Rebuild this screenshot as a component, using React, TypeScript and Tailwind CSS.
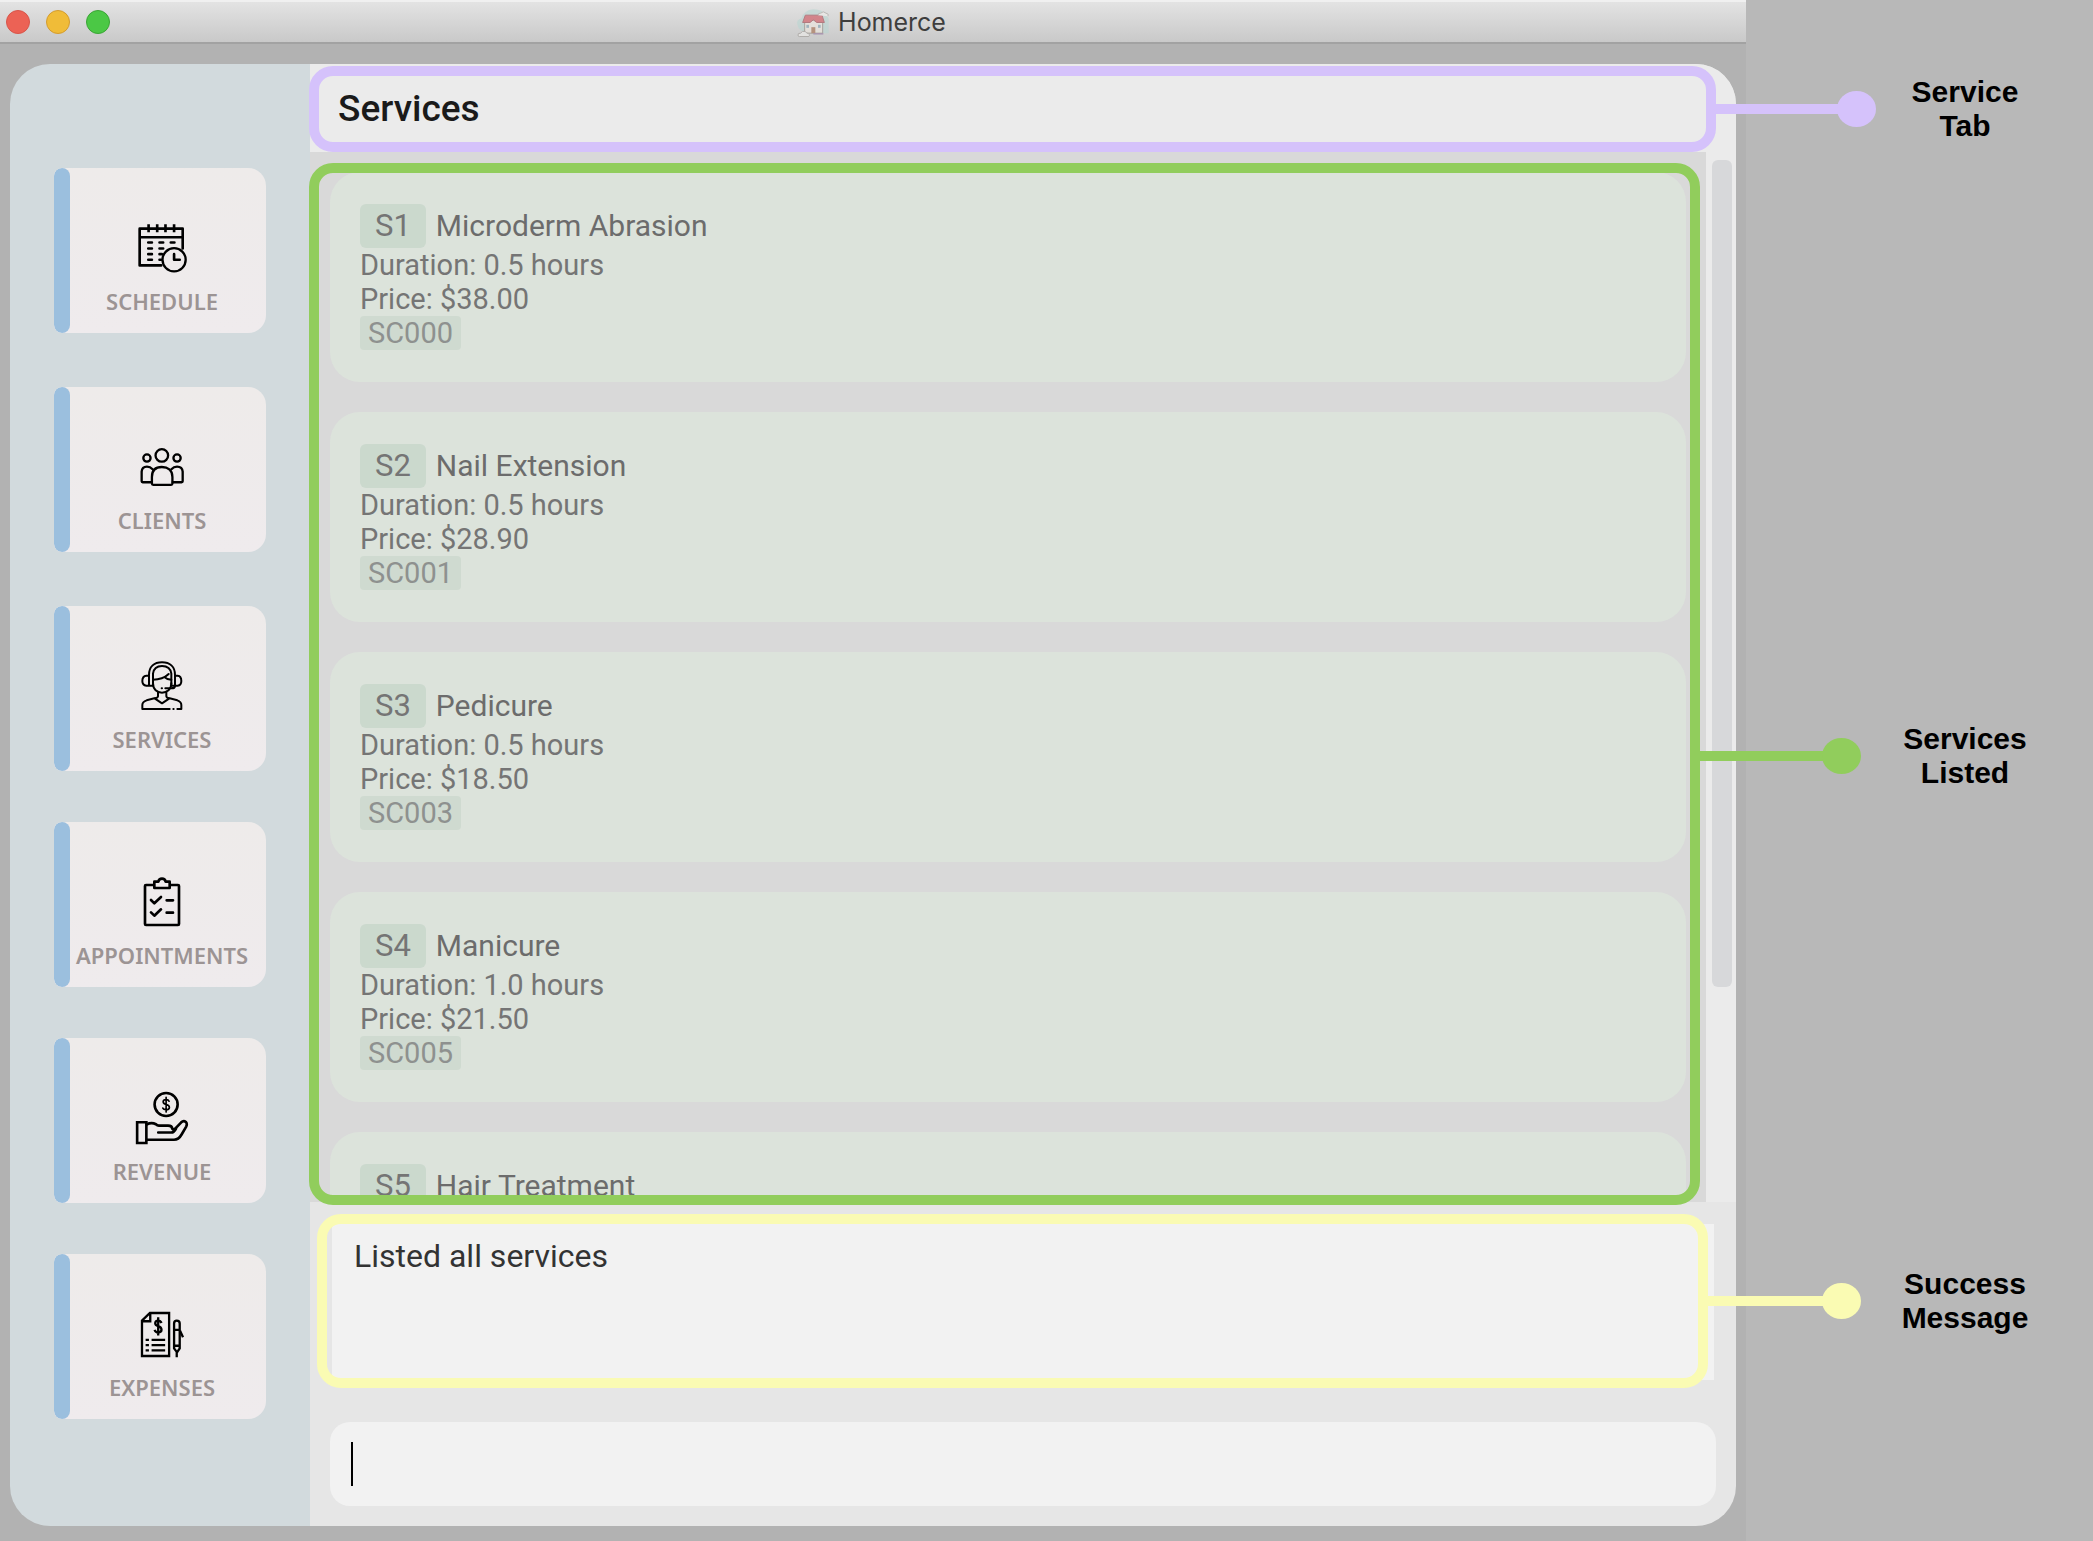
import React from "react";

type IconProps = { className?: string };

const stroke = {
  fill: "none",
  stroke: "#000",
  strokeLinecap: "round" as const,
  strokeLinejoin: "round" as const,
};

function HouseLogo() {
  return (
    <svg viewBox="46 20 102 92" className="h-[31px] w-[34px] opacity-60" aria-hidden="true">
      <path d="M50 72 Q46 58 62 54 Q70 28 98 26 Q128 26 134 44 Q146 48 144 62 V98 H80 Q54 92 50 72Z" fill="#b9d6d2" />
      <path d="M72 66 L96 58 L126 66 V98 H72Z" fill="#efe8df" stroke="#8b8279" strokeWidth="3" />
      <path d="M74 44 H124 L131 66 H108 L98 58 L88 66 H66Z" fill="#cf4f58" stroke="#9a4048" strokeWidth="3" />
      <rect x="92" y="80" width="12" height="18" fill="#a46a48" />
      <rect x="77" y="73" width="8" height="9" fill="#7f9fb0" />
      <rect x="112" y="73" width="8" height="9" fill="#7f9fb0" />
      <path d="M98 100 H128" stroke="#8d6b9b" strokeWidth="4" />
      <path d="M52 106 Q50 97 60 98 Q64 90 74 93 Q78 100 84 99 Q90 108 82 108 H56Z" fill="#f0efec" stroke="#9d9994" strokeWidth="3" />
      <path d="M112 44 Q112 37 120 38 Q128 30 136 38 Q146 40 142 47" fill="#f0efec" stroke="#a5a19c" strokeWidth="3" />
    </svg>
  );
}

function ScheduleIcon({ className }: IconProps) {
  return (
    <svg viewBox="414 668 152 148" className={className} aria-hidden="true">
      <g {...stroke} strokeWidth="8">
        <path d="M486 793 H421 V682 H551 V742 M421 708 H551" />
        <g strokeLinecap="butt">
          <path d="M448 669 V693 M474 669 V693 M499 669 V693 M525 669 V693" />
        </g>
        <path d="M447 724 H458 M481 724 H492 M515 724 H526 M447 742 H458 M481 742 H492 M447 759 H458 M481 759 H488 M447 776 H458 M481 776 H486" />
        <circle cx="525" cy="776" r="35" fill="#efebec" strokeWidth="7" />
        <path d="M525 759 V776 H542" />
      </g>
    </svg>
  );
}

function ClientsIcon({ className }: IconProps) {
  return (
    <svg viewBox="415 236 133 120" className={className} aria-hidden="true">
      <g {...stroke} strokeWidth="7">
        <circle cx="481" cy="261" r="19" />
        <circle cx="436" cy="269" r="11" />
        <circle cx="527" cy="269" r="11" />
        <path d="M451 346 V326 C451 306 463 296 481 296 C499 296 513 306 513 326 V346 Q513 350 509 350 H455 Q451 350 451 346Z" />
        <path d="M449 342 H423 Q420 342 420 339 V310 Q421 295 436 295 Q446 295 453 303" />
        <path d="M514 342 H541 Q544 342 544 339 V310 Q543 295 527 295 Q517 295 510 303" />
      </g>
    </svg>
  );
}

function ServicesIcon({ className }: IconProps) {
  return (
    <svg viewBox="440 878 126 150" className={className} aria-hidden="true">
      <g {...stroke} strokeWidth="6">
        <path d="M464 950 V920 C464 895 480 882 503 882 C526 882 542 895 542 920 V950" />
        <path d="M476 948 V916 Q479 893 503 893 Q528 893 531 916 V948" />
        <path d="M464 922 H456 Q444 923 444 938 Q444 951 456 952 H476" />
        <path d="M542 922 H550 Q561 923 561 938 Q561 951 550 952 H531" />
        <path d="M476 945 C476 963 488 973 503 973 C518 973 531 963 531 945" />
        <path d="M476 934 Q505 934 523 917 M510 926 Q517 933 531 934" />
        <path d="M542 953 Q541 960 532 960 H513 M502 960 H503" />
        <path d="M491 972 V984 Q490 989 480 990 L457 996 Q444 1000 444 1010 V1022 H526 M537 1022 H538 M549 1022 H561 V1010 Q561 1000 549 996 L526 990 Q517 989 516 984 V972" />
        <path d="M482 991 L503 1005 L524 991" />
      </g>
    </svg>
  );
}

function AppointmentsIcon({ className }: IconProps) {
  return (
    <svg viewBox="420 230 114 150" className={className} aria-hidden="true">
      <g {...stroke} strokeWidth="8">
        <rect x="426" y="254" width="102" height="120" rx="3" />
        <path d="M454 244 H466 Q468 235 477 235 Q486 235 488 244 H500 V263 H454Z" fill="#efebec" />
        <path d="M444 299 L454 309 L474 290 M444 336 L454 346 L474 327 M491 300 H510 M491 337 H510" />
      </g>
    </svg>
  );
}

function RevenueIcon({ className }: IconProps) {
  return (
    <svg viewBox="400 862 163 164" className={className} aria-hidden="true">
      <g {...stroke} strokeWidth="8">
        <circle cx="494" cy="903" r="35" />
        <path
          strokeWidth="5"
          d="M503 893 Q501 888 494 888 Q485 888 485 895 Q485 901 494 903 Q504 905 504 912 Q504 919 494 919 Q486 919 484 914 M494 881 V926"
        />
        <path strokeLinejoin="miter" d="M406 957 H434 V1020 H406Z" />
        <path d="M436 963 Q450 956 463 963 Q467 967 472 967 H500 Q512 967 513 977 Q518 981 523 975 L540 957 Q547 950 554 956 Q559 961 555 970 L541 994 Q532 1010 518 1010 H436" />
        <path d="M470 988 H510 Q518 988 524 976" />
      </g>
    </svg>
  );
}

function ExpensesIcon({ className }: IconProps) {
  return (
    <svg viewBox="424 283 136 142" className={className} aria-hidden="true">
      <g {...stroke} strokeWidth="7" strokeLinecap="butt" strokeLinejoin="miter">
        <path d="M430 312 L454 289 H512 V419 H430Z M455 289 V314 H430" />
        <path d="M489 319 Q486 312 479 312 Q470 312 470 320 Q470 326 479 329 Q489 332 489 340 Q489 348 479 348 Q471 348 468 340 M479 302 V357" />
        <path d="M441 370 H451 M441 386 H451 M441 402 H451 M459 370 H500 M459 386 H500 M459 402 H500" />
        <path d="M527 321 Q527 312 535 312 Q544 312 544 321 V396 L536 408 L527 396Z M527 340 H544 M527 388 H544 M535 405 V423" />
        <path d="M545 343 L554 362" />
      </g>
    </svg>
  );
}

type NavItem = { label: string; icon: React.ReactNode };

const upperNav: NavItem[] = [
  { label: "SCHEDULE", icon: <ScheduleIcon className="h-[49px] w-[51px]" /> },
  { label: "CLIENTS", icon: <ClientsIcon className="h-[40px] w-[44px]" /> },
  { label: "SERVICES", icon: <ServicesIcon className="h-[50px] w-[42px]" /> },
];

const lowerNav: NavItem[] = [
  { label: "APPOINTMENTS", icon: <AppointmentsIcon className="h-[50px] w-[38px]" /> },
  { label: "REVENUE", icon: <RevenueIcon className="h-[54px] w-[54px]" /> },
  { label: "EXPENSES", icon: <ExpensesIcon className="h-[47px] w-[45px]" /> },
];

function NavButton({ label, icon }: NavItem) {
  return (
    <button
      type="button"
      className="flex h-[165px] w-[212px] overflow-hidden rounded-l-[8px] rounded-r-[18px] bg-linear-to-b from-[#eeebea] to-[#efebed]"
    >
      <span className="h-full w-4 shrink-0 rounded-full bg-[#9bbfde]" />
      <span className="-ml-2 flex h-full flex-1 flex-col items-center pt-[53px] pr-1">
        <span className="flex h-[54px] items-center">{icon}</span>
        <span className="mt-2.5 font-['Noto_Sans',sans-serif] text-[22px] leading-8 font-semibold text-[#9c9494]">
          {label}
        </span>
      </span>
    </button>
  );
}

type Service = {
  id: string;
  name: string;
  details?: { hours: string; price: string; code: string };
};

const services: Service[] = [
  { id: "S1", name: "Microderm Abrasion", details: { hours: "0.5", price: "38.00", code: "SC000" } },
  { id: "S2", name: "Nail Extension", details: { hours: "0.5", price: "28.90", code: "SC001" } },
  { id: "S3", name: "Pedicure", details: { hours: "0.5", price: "18.50", code: "SC003" } },
  { id: "S4", name: "Manicure", details: { hours: "1.0", price: "21.50", code: "SC005" } },
  { id: "S5", name: "Hair Treatment" },
];

function ServiceCard({ id, name, details }: Service) {
  return (
    <li className="shrink-0 rounded-[30px] bg-[#dce3db] px-[30px] py-8 text-[29px] leading-[34px] text-[#757575]">
      <div className="flex items-center gap-2.5">
        <span className="rounded-md bg-[#cbd9cd] px-[15px] text-[31px] leading-[44px]">{id}</span>
        <h3 className="text-[30px] leading-[44px] text-[#6c6c6c]">{name}</h3>
      </div>
      {details && (
        <>
          <p>Duration: {details.hours} hours</p>
          <p>Price: ${details.price}</p>
          <p className="w-fit rounded bg-[#cfdad0] px-2 text-[#8e918f]">{details.code}</p>
        </>
      )}
    </li>
  );
}

type CalloutProps = {
  frame: string;
  color: string;
  row: string;
  line: string;
  text: string;
  lines: [string, string];
};

function Callout({ frame, color, row, line, text, lines }: CalloutProps) {
  return (
    <div className={`pointer-events-none absolute z-10 rounded-[24px] border-[10px] ${frame}`}>
      <div className={`absolute left-full flex -translate-y-1/2 items-center ${row}`}>
        <span className={`h-2.5 ${line} ${color}`} />
        <span className={`-ml-0.5 h-9 w-[39px] shrink-0 rounded-[50%] ${color}`} />
        <p
          className={`shrink-0 text-center font-['Liberation_Sans',sans-serif] text-[30px] leading-[34px] font-bold text-black ${text}`}
        >
          {lines[0]}
          <br />
          {lines[1]}
        </p>
      </div>
    </div>
  );
}

export default function App() {
  return (
    <div className="flex h-screen overflow-hidden bg-[#b8b8b8] pr-[347px] font-[Roboto,sans-serif]">
      <div className="flex min-w-0 flex-1 flex-col bg-[#b2b2b2]">
        <header className="relative flex h-11 shrink-0 items-center justify-center border-t-2 border-b-2 border-t-[#f0f0f0] border-b-[#a2a2a2] bg-linear-to-b from-[#e3e3e3] to-[#c9c9c9]">
          <div className="absolute left-1.5 flex gap-4">
            <button type="button" aria-label="Close" className="size-6 rounded-full border border-[#d8554a] bg-[#ec6255]" />
            <button type="button" aria-label="Minimize" className="size-6 rounded-full border border-[#d49c2e] bg-[#f0bc38]" />
            <button type="button" aria-label="Zoom" className="size-6 rounded-full border border-[#3aa535] bg-[#4bc845]" />
          </div>
          <div className="flex items-center gap-2 pr-1">
            <HouseLogo />
            <h1 className="font-[Inter,sans-serif] text-[25px] leading-8 text-[#3e3e3e]">Homerce</h1>
          </div>
        </header>

        <div className="flex min-h-0 flex-1 px-2.5 pt-5 pb-[15px]">
          <nav className="flex w-[300px] shrink-0 flex-col gap-[51px] rounded-l-[40px] bg-[#d2dadd] pt-[104px] pl-11">
            <div className="flex flex-col gap-[54px]">
              {upperNav.map((item) => (
                <NavButton key={item.label} {...item} />
              ))}
            </div>
            <div className="flex flex-col gap-[51px]">
              {lowerNav.map((item) => (
                <NavButton key={item.label} {...item} />
              ))}
            </div>
          </nav>

          <main className="flex min-w-0 flex-1 flex-col rounded-r-[40px] bg-[#e6e6e6]">
            <section className="relative flex h-[88px] shrink-0 items-center rounded-tr-[40px] bg-[#ebebeb] pl-7">
              <h2 className="text-[37px] leading-none font-medium text-[#1a1a1a]">Services</h2>
              <Callout
                frame="-left-px right-5 top-0.5 bottom-0 border-[#d5c2fb]"
                color="bg-[#d5c2fb]"
                row="top-1/2"
                line="w-[133px]"
                text="w-[178px]"
                lines={["Service", "Tab"]}
              />
            </section>

            <section className="flex min-h-0 flex-1">
              <div className="relative min-w-0 flex-1 bg-[#d9d9d9] pb-[7px]">
                <ul className="flex h-full flex-col gap-[30px] overflow-hidden px-5 pt-5">
                  {services.map((service) => (
                    <ServiceCard key={service.id} {...service} />
                  ))}
                </ul>
                <Callout
                  frame="-left-px right-1.5 top-[11px] -bottom-[3px] border-[#91cd5c]"
                  color="bg-[#91cd5c]"
                  row="top-[57%]"
                  line="w-[134px]"
                  text="w-[208px]"
                  lines={["Services", "Listed"]}
                />
              </div>
              <div className="w-[30px] shrink-0 bg-[#ebebeb] py-2 pr-1 pl-1.5">
                <div className="h-4/5 rounded-md bg-[#d7d8da]" />
              </div>
            </section>

            <section className="shrink-0 px-5 pt-[22px] pb-5">
              <div className="relative mx-0.5 h-[156px] bg-[#f2f2f2] px-[22px] pt-2.5">
                <p className="text-[32px] leading-[44px] text-[#333]">Listed all services</p>
                <Callout
                  frame="-left-[15px] right-1.5 -top-2.5 -bottom-2 border-[#fafbb3]"
                  color="bg-[#fafbb3]"
                  row="top-1/2"
                  line="w-[126px]"
                  text="w-[208px]"
                  lines={["Success", "Message"]}
                />
              </div>
              <div className="mt-[42px] flex h-[84px] items-center rounded-[20px] bg-[#f2f2f2] pl-[21px]">
                <span className="h-11 w-0.5 bg-black" />
                <input
                  type="text"
                  aria-label="Command"
                  className="h-full min-w-0 flex-1 rounded-r-[20px] bg-transparent pr-5 text-[32px] text-[#333] outline-none"
                />
              </div>
            </section>
          </main>
        </div>
      </div>
    </div>
  );
}
